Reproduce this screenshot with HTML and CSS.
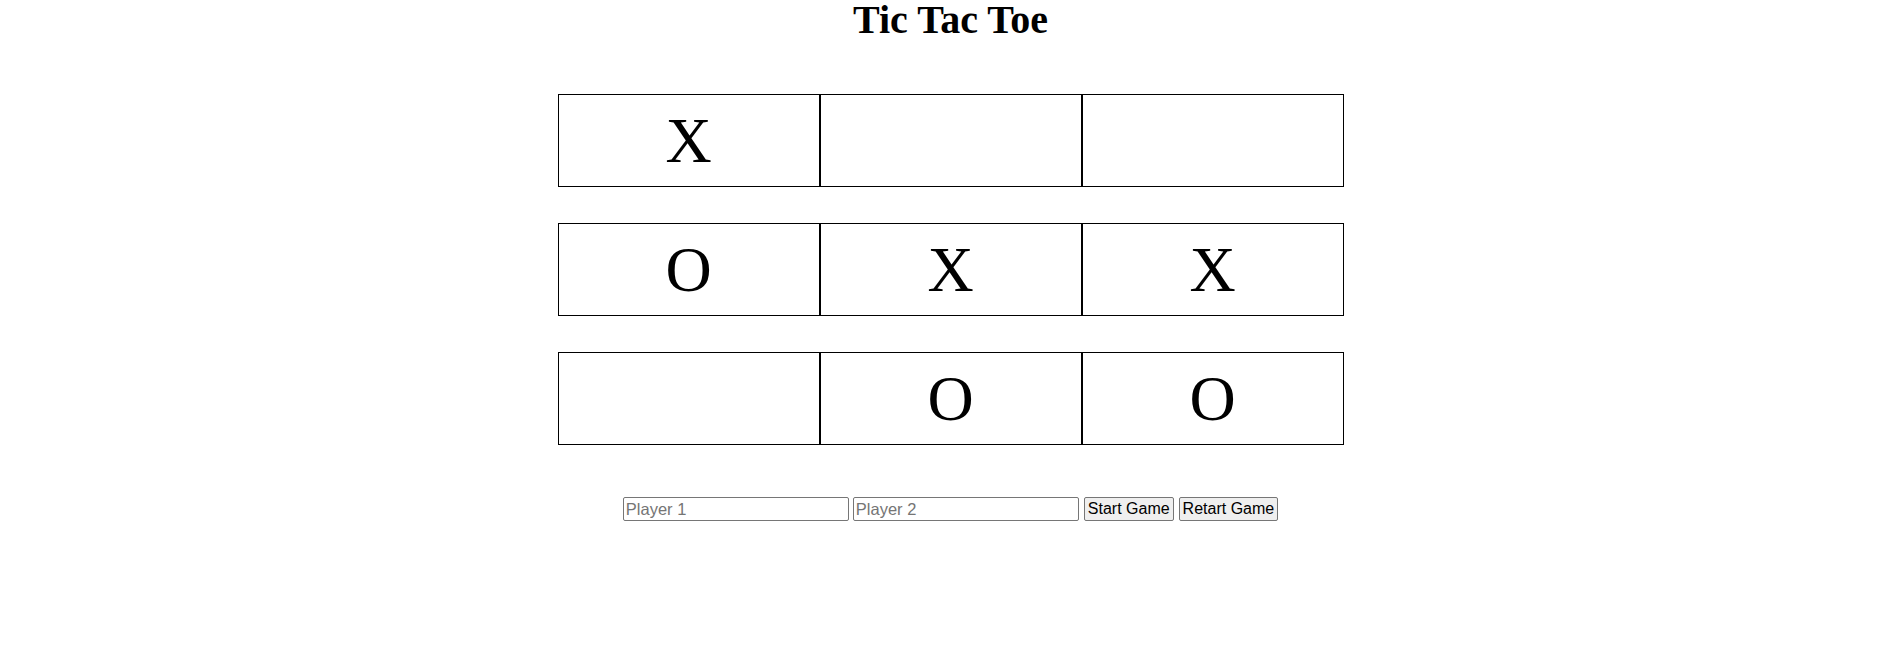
FILE: index.html
```html
<!DOCTYPE html>
<html lang="en">

<head>
    <meta charset="UTF-8">
    <meta name="viewport" content="width=device-width, initial-scale=1.0">
    <title>Tic Tac Toe</title>
    <link rel="stylesheet" href="styles.css">
</head>

<body>
    <h1 class="title">Tic Tac Toe</h1>

    <div class="board">
        <div class="row">
            <div class="cell">X</div>
            <div class="cell"></div>
            <div class="cell"></div>
        </div>
        <div class="row">
            <div class="cell">O</div>
            <div class="cell">X</div>
            <div class="cell">X</div>
        </div>
        <div class="row">
            <div class="cell"></div>
            <div class="cell">O</div>
            <div class="cell">O</div>
        </div>
    </div>

    <div class="controls">
        <input type="text" class="player" placeholder="Player 1">
        <input type="text" class="player" placeholder="Player 2">
        <button class="btn">Start Game</button>
        <button class="btn">Retart Game</button>
    </div>
</body>

</html>
```

FILE: styles.css
```css
body {
    margin: 0;
    font-family: 'Liberation Serif', serif;
    background: #fff;
    color: #000;
}

.title {
    margin: 0;
    padding-top: 4px;
    font-size: 40px;
    line-height: 32px;
    text-align: center;
}

.board {
    display: flex;
    flex-direction: column;
    align-items: center;
    gap: 36px;
    margin-top: 58px;
}

.row {
    display: flex;
}

.cell {
    box-sizing: border-box;
    width: 262px;
    height: 93px;
    border: 1px solid #000;
    font-size: 64px;
    line-height: 91px;
    text-align: center;
}

.controls {
    display: flex;
    justify-content: center;
    gap: 4px;
    margin-top: 52px;
}

.player {
    box-sizing: border-box;
    width: 226px;
    height: 24px;
    padding: 1px 2px;
    border: 1px solid #767676;
    border-radius: 2px;
    font-family: 'Liberation Sans', Arial, sans-serif;
    font-size: 16.5px;
}

.player::placeholder {
    color: #757575;
}

.btn {
    box-sizing: border-box;
    height: 24px;
    padding: 1px 3px;
    margin-left: 1px;
    background-color: #efefef;
    border: 1px solid #767676;
    border-radius: 2px;
    font-family: 'Liberation Sans', Arial, sans-serif;
    font-size: 16px;
    color: #000;
}
```
